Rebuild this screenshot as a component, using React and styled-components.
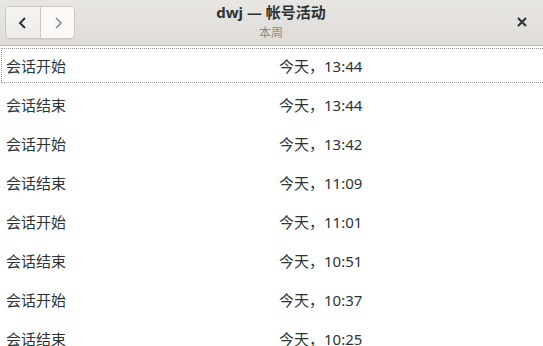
import React from "react";
import styled, { createGlobalStyle } from "styled-components";

const Global = createGlobalStyle`
  html, body { margin: 0; padding: 0; background: #ffffff; }
  body { font-family: "Noto Sans", "Noto Sans CJK SC", sans-serif; color: #2e3436; overflow: hidden; }
`;

const Window = styled.div`
  width: 543px;
  height: 346px;
  display: flex;
  flex-direction: column;
  background: #ffffff;
  overflow: hidden;
`;

const HeaderBar = styled.header`
  height: 45px;
  flex: none;
  display: grid;
  grid-template-columns: 1fr auto 1fr;
  align-items: center;
  padding: 0 6px 0 5px;
  background: linear-gradient(to bottom, #e8e6e3, #dfdcd8);
  border-bottom: 1px solid #bfb8b1;
  box-sizing: content-box;
`;

const NavGroup = styled.div`
  display: flex;
  justify-self: start;
  border: 1px solid #cdc7c2;
  border-radius: 5px;
  overflow: hidden;
  height: 31px;
  margin-top: 0px;
  box-shadow: 0 1px 0 rgba(0,0,0,0.05);
`;

const NavButton = styled.button`
  width: 34px;
  height: 31px;
  padding: 0;
  margin: 0;
  border: none;
  border-left: ${(p) => (p.$first ? "none" : "1px solid #cdc7c2")};
  background: ${(p) => (p.$disabled ? "#faf9f8" : "linear-gradient(to bottom, #f4f3f2, #edebe9)")};
  display: flex;
  align-items: center;
  justify-content: center;
  color: ${(p) => (p.$disabled ? "#8b8e8f" : "#2e3436")};
`;

const TitleBox = styled.div`
  display: flex;
  flex-direction: column;
  align-items: center;
  justify-content: center;
  line-height: 1;
`;

const Title = styled.div`
  font-family: "Noto Sans", "Noto Sans CJK SC", sans-serif;
  font-weight: 700;
  font-size: 15px;
  color: #2e3436;
  margin-top: -1px;
`;

const Subtitle = styled.div`
  font-size: 12px;
  color: #8b8e8f;
  margin-top: 7px;
`;

const CloseButton = styled.div`
  justify-self: end;
  width: 30px;
  height: 30px;
  display: flex;
  align-items: center;
  justify-content: center;
  margin-top: -2px;
`;

const List = styled.div`
  display: flex;
  flex-direction: column;
`;

const Row = styled.div`
  height: 39px;
  display: grid;
  grid-template-columns: 273px 1fr;
  align-items: center;
  font-size: 15px;
  color: #2e3436;
  position: relative;
  padding-left: 6px;
  box-sizing: border-box;
  &::after {
    content: "";
    display: ${(p) => (p.$focused ? "block" : "none")};
    position: absolute;
    left: 1px;
    top: 2px;
    right: -2px;
    bottom: 2px;
    border: 1px dotted #9a9a9a;
  }
`;

const Cell = styled.span`
  font-family: "Noto Sans", "Noto Sans CJK SC", sans-serif;
`;

const rows = [
  ["会话开始", "今天，13:44"],
  ["会话结束", "今天，13:44"],
  ["会话开始", "今天，13:42"],
  ["会话结束", "今天，11:09"],
  ["会话开始", "今天，11:01"],
  ["会话结束", "今天，10:51"],
  ["会话开始", "今天，10:37"],
  ["会话结束", "今天，10:25"],
];

export default function App() {
  return (
    <Window>
      <Global />
      <HeaderBar>
        <NavGroup>
          <NavButton $first aria-label="back">
            <svg width="16" height="16" viewBox="0 0 16 16">
              <path d="M10 3 L5 8 L10 13" fill="none" stroke="currentColor" strokeWidth="2" />
            </svg>
          </NavButton>
          <NavButton $disabled aria-label="forward">
            <svg width="16" height="16" viewBox="0 0 16 16">
              <path d="M6 3 L11 8 L6 13" fill="none" stroke="currentColor" strokeWidth="1.6" />
            </svg>
          </NavButton>
        </NavGroup>
        <TitleBox>
          <Title>dwj — 帐号活动</Title>
          <Subtitle>本周</Subtitle>
        </TitleBox>
        <CloseButton>
          <svg width="10" height="10" viewBox="0 0 10 10">
            <path d="M1 1 L9 9 M9 1 L1 9" stroke="#2e3436" strokeWidth="2.2" />
          </svg>
        </CloseButton>
      </HeaderBar>
      <List>
        {rows.map(([a, b], i) => (
          <Row key={i} $focused={i === 0}>
            <Cell>{a}</Cell>
            <Cell>{b}</Cell>
          </Row>
        ))}
      </List>
    </Window>
  );
}
